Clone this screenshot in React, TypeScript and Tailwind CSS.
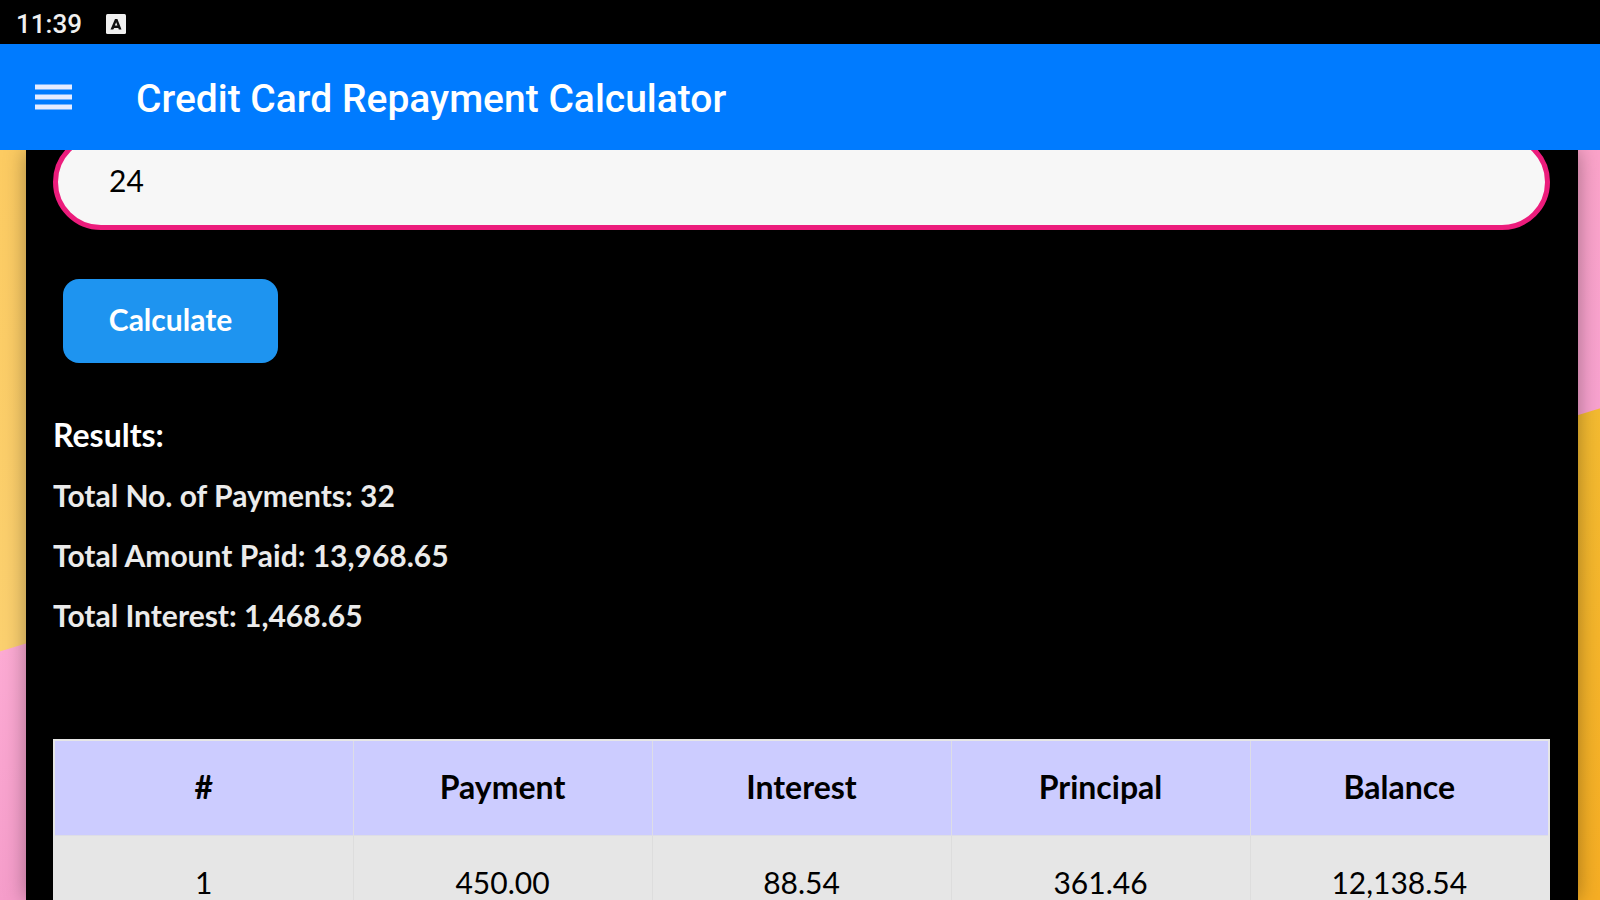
const results = [
  { label: 'Total No. of Payments', value: '32' },
  { label: 'Total Amount Paid', value: '13,968.65' },
  { label: 'Total Interest', value: '1,468.65' },
];

const columns = ['#', 'Payment', 'Interest', 'Principal', 'Balance'];

const payments = [['1', '450.00', '88.54', '361.46', '12,138.54']];

const StatusBar = () => (
  <div className="flex h-11 shrink-0 items-center gap-6 bg-black px-4 pt-1 text-[#f0f0f0]">
    <span className="text-[26px] leading-10 font-medium">11:39</span>
    <svg className="h-5 w-5" viewBox="0 0 20 20" aria-hidden="true">
      <rect width="20" height="20" rx="1.5" fill="#f0f0f0" />
      <path
        d="M4.5 15.5 9 5h2.4l4.1 10.5h-2.7l-.5-1.5H8.2l-1 1.5Zm4.3-4h2.6L10.2 8.2Z"
        fill="#111"
        fillRule="evenodd"
      />
    </svg>
  </div>
);

const AppBar = () => (
  <header className="relative z-10 flex h-[106px] shrink-0 items-center gap-16 bg-[#007bff] px-[35px] text-white">
    <button type="button" aria-label="Open menu">
      <svg className="h-[26px] w-[37px]" viewBox="0 0 37 26" fill="#e6ecff" aria-hidden="true">
        <rect y="0.5" width="37" height="5" />
        <rect y="10.5" width="37" height="5" />
        <rect y="20.5" width="37" height="5" />
      </svg>
    </button>
    <h1 className="pt-1 text-[39px] leading-[48px] font-medium">Credit Card Repayment Calculator</h1>
  </header>
);

const RepaymentTable = () => (
  <table className="w-full table-fixed border-collapse border-2 border-[#e6e6e6] text-center leading-[40px] text-black">
    <thead>
      <tr className="h-[95px] bg-[#ccccff] text-[32px]">
        {columns.map((column) => (
          <th key={column} scope="col" className="border border-[#dddde6] pb-0.5 font-bold">
            {column}
          </th>
        ))}
      </tr>
    </thead>
    <tbody>
      {payments.map((row) => (
        <tr key={row[0]} className="h-[95px] bg-[#e6e6e6] text-[30px]">
          {row.map((cell, index) => (
            <td key={index} className="border border-[#dddddd]">
              {cell}
            </td>
          ))}
        </tr>
      ))}
    </tbody>
  </table>
);

const App = () => {
  return (
    <div className="flex h-screen flex-col overflow-hidden bg-black font-['Roboto',sans-serif]">
      <StatusBar />
      <AppBar />
      <main className="flex min-h-0 flex-1 overflow-hidden font-['Lato',sans-serif]">
        <div className="w-[26px] shrink-0 bg-[linear-gradient(163deg,#fccb62_0px,#fbd06f_479px,#fcaad3_480px,#f59dca_720px)]" />
        <div className="relative flex-1 bg-black pr-7 pl-[27px] shadow-[0_0_20px_rgba(0,0,0,0.35)]">
          <form onSubmit={(e) => e.preventDefault()}>
            <input
              type="text"
              aria-label="Number of payments"
              defaultValue="24"
              className="-mt-4 block h-24 w-full rounded-full border-[5px] border-[#ec1c7c] bg-[#f7f7f7] px-[51px] pb-1 text-[30px] leading-[40px] text-black outline-none"
            />
            <button
              type="submit"
              className="mt-[49px] ml-[10px] h-[84px] w-[215px] rounded-[16px] bg-[#1e94f0] pb-1 text-[30px] leading-[40px] font-bold text-white"
            >
              Calculate
            </button>
          </form>

          <section className="mt-[42px] mb-[94px] text-[30px] leading-[60px] font-bold text-[#ebebeb]">
            <h2 className="text-[32px] leading-[60px] text-white">Results:</h2>
            {results.map((result) => (
              <p key={result.label}>
                {result.label}: {result.value}
              </p>
            ))}
          </section>

          <RepaymentTable />
        </div>
        <div className="w-[22px] shrink-0 bg-[linear-gradient(163deg,#fba3c9_0px,#f8a2cf_253px,#f4bb31_254px,#f6ae24_720px)]" />
      </main>
    </div>
  );
};

export default App;
